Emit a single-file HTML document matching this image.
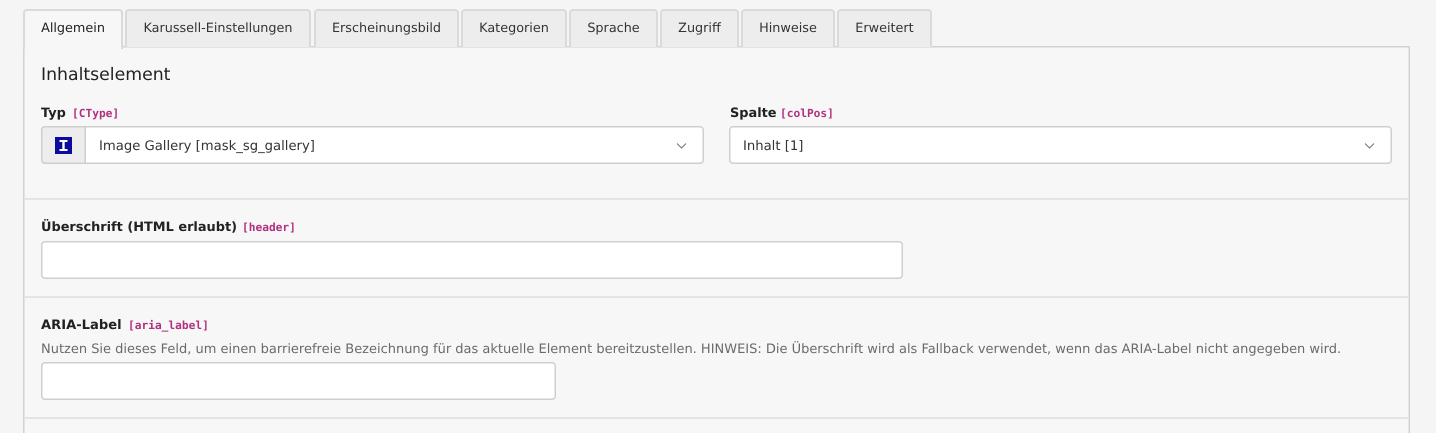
<!DOCTYPE html>
<html lang="de"><head><meta charset="utf-8"><title>Inhaltselement</title>
<style>
html,body{margin:0;padding:0;width:1436px;height:433px;overflow:hidden;background:#f5f5f5;font-family:"DejaVu Sans","Liberation Sans",sans-serif;color:#212121}
*{box-sizing:border-box}
#w{position:relative;width:1436px;height:433px;overflow:hidden;background:#f5f5f5;text-rendering:geometricPrecision}
#f{position:absolute;left:0;top:0;width:1436px;height:433px;overflow:hidden;filter:blur(.3px)}
.a{position:absolute;white-space:nowrap}
.tab{position:absolute;top:9px;height:38px;background:#ededed;border:2px solid #dadada;border-bottom:none;border-radius:4px 4px 0 0;font-size:12.8px;line-height:35px;text-align:center;color:#333}
.tab.on{background:#f7f7f7;height:40px;top:9px;z-index:3;color:#212121}
.panel{position:absolute;left:23px;top:46px;width:1387px;height:387px;background:#f7f7f7;box-shadow:inset 1.5px 0 0 #d2d2d2,inset -1.5px 0 0 #d2d2d2,inset 0 1.5px 0 #d2d2d2}
.hr{position:absolute;left:25px;width:1383px;height:2px;background:#e4e4e4}
.lab{font-weight:bold;font-size:12.9px;line-height:16px;color:#212121}
.code{position:absolute;font-family:"DejaVu Sans Mono","Liberation Mono",monospace;font-size:11.2px;line-height:16px;font-weight:bold;color:#b0307f;white-space:nowrap}
.box{position:absolute;height:38px;background:#fff;box-shadow:inset 0 0 0 1.5px #cfcfcf;border-radius:4px}
.txt{font-size:13.2px;line-height:16px;color:#333}
</style></head><body>
<div id="w"><div id="f">
<div class="panel"></div>
<div class="tab on" style="left:23px;width:100px">Allgemein</div>
<div class="tab" style="left:125px;width:186px">Karussell-Einstellungen</div>
<div class="tab" style="left:314px;width:145px">Erscheinungsbild</div>
<div class="tab" style="left:461px;width:106px">Kategorien</div>
<div class="tab" style="left:569px;width:89px">Sprache</div>
<div class="tab" style="left:660px;width:79px">Zugriff</div>
<div class="tab" style="left:741px;width:94px">Hinweise</div>
<div class="tab" style="left:837px;width:95px">Erweitert</div>

<div class="a" style="left:41px;top:65px;font-size:17.300px;line-height:21px;color:#212121">Inhaltselement</div>

<div class="a lab" style="left:41px;top:106px">Typ</div><div class="code" style="left:72px;top:106px">[CType]</div>
<div class="box" style="left:41px;top:126px;width:663px"></div>
<div class="a" style="left:41px;top:126px;width:45px;height:38px;background:#ededed;box-shadow:inset 0 0 0 1.5px #cfcfcf;border-radius:4px 0 0 4px"></div>
<svg class="a" style="left:55px;top:136.500px" width="17" height="17" viewBox="0 0 17 17"><rect width="17" height="17" fill="#0c0c9c"/><path d="M4.500 3h8v2h-2.800v7h2.800v2h-8v-2h2.800v-7h-2.800z" fill="#fff"/></svg>
<div class="a txt" style="left:99px;top:139px">Image Gallery [mask_sg_gallery]</div>
<svg class="a" style="left:676px;top:142px" width="11" height="8" viewBox="0 0 11 8"><path d="M1 1.500l4.500 4.500L10 1.500" fill="none" stroke="#777" stroke-width="1.100"/></svg>

<div class="a lab" style="left:730px;top:106px">Spalte</div><div class="code" style="left:780px;top:106px">[colPos]</div>
<div class="box" style="left:729px;top:126px;width:663px"></div>
<div class="a txt" style="left:743px;top:139px">Inhalt [1]</div>
<svg class="a" style="left:1364px;top:142px" width="11" height="8" viewBox="0 0 11 8"><path d="M1 1.500l4.500 4.500L10 1.500" fill="none" stroke="#777" stroke-width="1.100"/></svg>

<div class="hr" style="top:198px"></div>
<div class="a lab" style="left:41px;top:220px">Überschrift (HTML erlaubt)</div><div class="code" style="left:242px;top:220px">[header]</div>
<div class="box" style="left:41px;top:241px;width:862px"></div>

<div class="hr" style="top:296px"></div>
<div class="a lab" style="left:41px;top:318px;font-size:13.100px">ARIA-Label</div><div class="code" style="left:128px;top:318px">[aria_label]</div>
<div class="a" style="left:41px;top:342px;font-size:12.990px;line-height:16px;color:#6a6a6a">Nutzen Sie dieses Feld, um einen barrierefreie Bezeichnung für das aktuelle Element bereitzustellen. HINWEIS: Die Überschrift wird als Fallback verwendet, wenn das ARIA-Label nicht angegeben wird.</div>
<div class="box" style="left:41px;top:362px;width:515px"></div>

<div class="hr" style="top:417px"></div>
</div></div>
</body></html>
